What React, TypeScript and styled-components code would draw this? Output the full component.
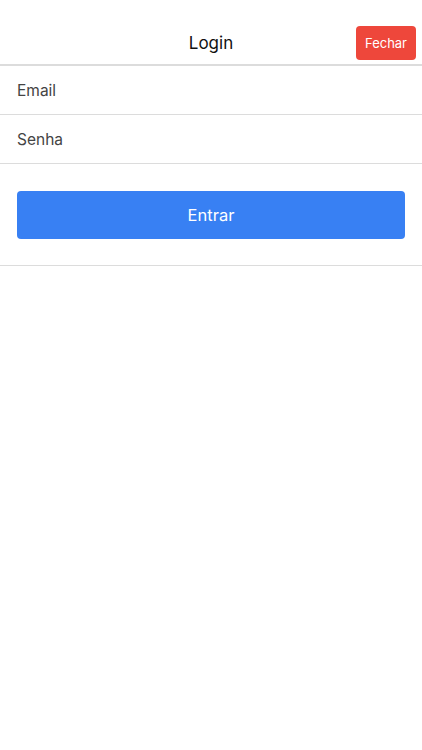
import React from "react";
import styled, { createGlobalStyle } from "styled-components";

const Global = createGlobalStyle`
  html, body { margin: 0; padding: 0; background: #fff; }
  body { font-family: Inter, "Noto Sans", sans-serif; -webkit-font-smoothing: antialiased; }
  * { box-sizing: border-box; }
`;

const Page = styled.div`
  width: 422px;
  min-height: 750px;
  background: #fff;
  display: flex;
  flex-direction: column;
`;

const Header = styled.header`
  height: 66px;
  padding-top: 22px;
  border-bottom: 2px solid #dcdcdc;
  display: grid;
  grid-template-columns: 1fr auto 1fr;
  align-items: center;
`;

const Title = styled.h1`
  grid-column: 2;
  margin: 0;
  font-size: 17px;
  font-weight: 400;
  color: #111;
`;

const CloseCell = styled.div`
  grid-column: 3;
  display: flex;
  justify-content: flex-end;
  padding-right: 6px;
`;

const CloseButton = styled.button`
  width: 60px;
  height: 34px;
  border: none;
  border-radius: 4px;
  background: #ee473b;
  color: #fff;
  font-family: inherit;
  font-size: 13px;
  padding: 0;
`;

const Field = styled.input`
  display: block;
  width: 100%;
  height: 49px;
  border: none;
  border-bottom: 1px solid #dcdcdc;
  padding: 1px 17px 0;
  font-family: inherit;
  font-size: 15.5px;
  color: #444;
  outline: none;
  &::placeholder { color: #444; }
`;

const Actions = styled.div`
  padding: 27px 17px 26px;
  border-bottom: 1px solid #dcdcdc;
`;

const Submit = styled.button`
  display: block;
  width: 100%;
  height: 48px;
  border: none;
  border-radius: 4px;
  background: #3880f3;
  color: #fff;
  font-family: inherit;
  font-size: 16.5px;
`;

export default function App() {
  return (
    <Page>
      <Global />
      <Header>
        <Title>Login</Title>
        <CloseCell>
          <CloseButton>Fechar</CloseButton>
        </CloseCell>
      </Header>
      <Field placeholder="Email" />
      <Field placeholder="Senha" type="password" />
      <Actions>
        <Submit>Entrar</Submit>
      </Actions>
    </Page>
  );
}
